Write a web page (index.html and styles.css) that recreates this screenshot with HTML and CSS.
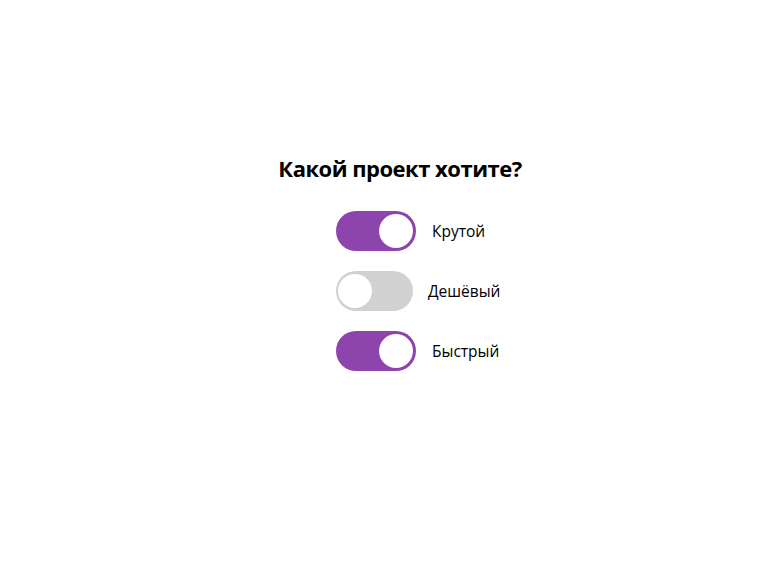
FILE: index.html
```html
<!DOCTYPE html>
<html lang="ru">
<head>
<meta charset="utf-8">
<title>Какой проект хотите?</title>
<link rel="stylesheet" href="styles.css">
</head>
<body>
<main class="page">
  <h1 class="title">Какой проект хотите?</h1>
  <div class="options">
    <label class="option">
      <span class="switch switch-on"><span class="knob"></span></span>
      <span class="label">Крутой</span>
    </label>
    <label class="option">
      <span class="switch switch-off"><span class="knob"></span></span>
      <span class="label">Дешёвый</span>
    </label>
    <label class="option">
      <span class="switch switch-on"><span class="knob"></span></span>
      <span class="label">Быстрый</span>
    </label>
  </div>
</main>
</body>
</html>
```
FILE: styles.css
```css
html, body {
  margin: 0;
  padding: 0;
  background: #ffffff;
}
body {
  font-family: "Open Sans", "Noto Sans", sans-serif;
  color: #000;
}
.page {
  padding-top: 150px;
}
.title {
  margin: 0;
  padding-left: 32px;
  text-align: center;
  font-size: 22px;
  font-weight: 700;
  line-height: 36px;
  letter-spacing: -0.5px;
}
.options {
  margin: 25px 0 0 336px;
  display: flex;
  flex-direction: column;
  gap: 20px;
}
.option {
  display: flex;
  align-items: center;
  height: 40px;
}
.switch {
  box-sizing: border-box;
  height: 40px;
  border-radius: 20px;
  display: flex;
  align-items: center;
  padding: 0 3px;
}
.switch-on {
  width: 80px;
  background: #8e44ad;
  justify-content: flex-end;
}
.switch-off {
  width: 77px;
  background: #d1d1d1;
  justify-content: flex-start;
  padding: 0 2px;
}
.knob {
  width: 34px;
  height: 34px;
  border-radius: 50%;
  background: #fff;
}
.label {
  font-size: 15.5px;
  margin-left: 16px;
}
.switch-off + .label {
  margin-left: 15px;
}
```
